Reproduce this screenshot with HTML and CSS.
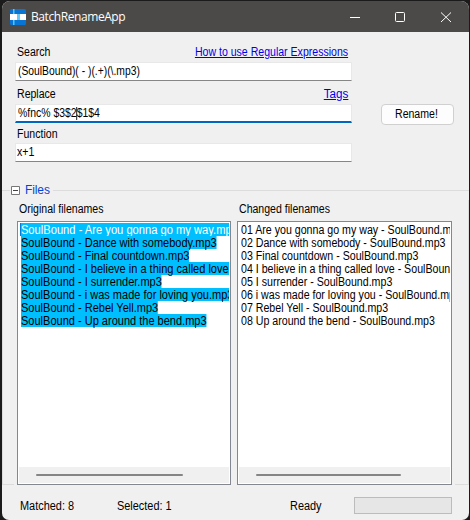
FILE: index.html
```
<!DOCTYPE html>
<html lang="en">
<head>
<meta charset="utf-8">
<title>BatchRenameApp</title>
<link rel="stylesheet" href="styles.css">
</head>
<body>
<main class="window">
  <header class="titlebar">
    <svg class="logo" width="16" height="16" viewBox="0 0 16 16">
      <rect width="16" height="16" rx="1.5" fill="#0875d5"/>
      <rect y="5" width="16" height="6" fill="#fff"/>
      <path d="M3 0h1.5v5H3zM3 11h1.5v5H3z" fill="#50c8f4"/>
      <path d="M7 5h3v6H7z" fill="#66c9f5"/>
    </svg>
    <h1 class="title">BatchRenameApp</h1>
    <svg class="controls" width="104" height="12" viewBox="0 0 104 12" fill="none" stroke="#fff">
      <path d="M0 6.5h10"/>
      <rect x="45.5" y="1.5" width="9" height="9" rx="1"/>
      <path d="M91 1.5l10 9.5M101 1.5l-10 9.5"/>
    </svg>
  </header>
  <section class="form">
    <div class="fields">
      <div class="caption"><label class="narrow">Search</label><a class="narrow help" href="#">How to use Regular Expressions</a></div>
      <div class="input"><span class="narrow pattern">(SoulBound)( - )(.+)(\.mp3)</span></div>
      <div class="caption"><label class="narrow">Replace</label><a class="narrow tags" href="#">Tags</a></div>
      <div class="input focused"><span class="narrow template">%fnc% $3$2<i class="caret"></i>$1$4</span></div>
      <div class="caption function"><label class="narrow">Function</label></div>
      <div class="input last"><span class="narrow">x+1</span></div>
    </div>
    <button class="rename"><span class="narrow">Rename!</span></button>
  </section>
  <section class="group">
    <div class="legend">
      <span class="rule start"></span>
      <svg width="9" height="9" viewBox="0 0 9 9" fill="#fff" stroke="#777"><path d="M.5.5h8v8h-8z"/><path d="M2 4.5h5" stroke="#444"/></svg>
      <span class="legend-text">Files</span>
      <span class="rule"></span>
    </div>
    <div class="lists">
      <div class="column original">
        <h2 class="heading"><span class="narrow">Original filenames</span></h2>
        <div class="listbox">
          <ul class="items marked">
            <li class="current"><span class="narrow">SoulBound - Are you gonna go my way.mp3</span></li>
            <li><span class="narrow">SoulBound - Dance with somebody.mp3</span></li>
            <li><span class="narrow">SoulBound - Final countdown.mp3</span></li>
            <li><span class="narrow">SoulBound - I believe in a thing called love.mp3</span></li>
            <li><span class="narrow">SoulBound - I surrender.mp3</span></li>
            <li><span class="narrow">SoulBound - i was made for loving you.mp3</span></li>
            <li><span class="narrow">SoulBound - Rebel Yell.mp3</span></li>
            <li><span class="narrow">SoulBound - Up around the bend.mp3</span></li>
          </ul>
          <div class="scroll"><span class="thumb"></span></div>
        </div>
      </div>
      <div class="column">
        <h2 class="heading"><span class="narrow">Changed filenames</span></h2>
        <div class="listbox">
          <ul class="items changed">
            <li><span class="narrow">01 Are you gonna go my way - SoulBound.mp3</span></li>
            <li><span class="narrow">02 Dance with somebody - SoulBound.mp3</span></li>
            <li><span class="narrow">03 Final countdown - SoulBound.mp3</span></li>
            <li><span class="narrow">04 I believe in a thing called love - SoulBound.mp3</span></li>
            <li><span class="narrow">05 I surrender - SoulBound.mp3</span></li>
            <li><span class="narrow">06 i was made for loving you - SoulBound.mp3</span></li>
            <li><span class="narrow">07 Rebel Yell - SoulBound.mp3</span></li>
            <li><span class="narrow">08 Up around the bend - SoulBound.mp3</span></li>
          </ul>
          <div class="scroll right"><span class="thumb"></span></div>
        </div>
      </div>
    </div>
  </section>
  <footer class="status">
    <span class="matched"><span class="narrow">Matched: 8</span></span>
    <span class="selected"><span class="narrow">Selected: 1</span></span>
    <span class="ready"><span class="narrow">Ready</span></span>
    <span class="progress"></span>
  </footer>
</main>
</body>
</html>
```

FILE: styles.css
```
* { box-sizing: border-box; }
body {
  margin: 0;
  width: 470px;
  height: 520px;
  padding: 1px 1px 0 2px;
  background: #1c1b1b;
  font: 12px/13px "Liberation Sans", Arial, sans-serif;
  color: #000;
  overflow: hidden;
}
/* condensed dialog face */
.narrow {
  display: inline-block;
  transform: scaleX(0.88);
  transform-origin: 0 50%;
  letter-spacing: 0;
  vertical-align: top;
}
.window {
  height: 519px;
  display: flex;
  flex-direction: column;
  background: #f0f0f0;
  border-radius: 8px 8px 7px 7px;
  overflow: hidden;
}
.titlebar {
  height: 31px;
  flex: none;
  display: flex;
  align-items: center;
  padding: 0 15px 0 8px;
  background: #4b4a48;
  color: #fff;
}
.title {
  margin: 1px auto 0 5px;
  font: 12px/16px "Open Sans", "Noto Sans", sans-serif;
  letter-spacing: -0.42px;
}
.form { display: flex; height: 148px; padding: 12px 14px 0 13px; }
.fields { width: 337px; }
.caption {
  height: 18px;
  padding: 2px 4px 0 2px;
  display: flex;
  justify-content: space-between;
}
a { color: #0000e6; text-decoration: underline; text-underline-offset: 1px; }
a.narrow { transform-origin: 100% 50%; }
.tags.narrow { transform: scaleX(0.97); }
.input {
  height: 19px;
  margin-bottom: 5px;
  padding: 2px;
  background: #fff;
  border: 1px solid #e8e8e8;
  border-bottom-color: #868686;
  white-space: pre;
}
.pattern.narrow { transform: scaleX(0.86); }
.template.narrow { transform: scaleX(0.87); }
.focused { border-bottom: 2px solid #0067c0; margin-bottom: 3px; }
.function { height: 17px; }
.last { padding-left: 1px; }
.caret {
  display: inline-block;
  width: 1px;
  height: 13px;
  margin-right: -1px;
  background: #000;
  vertical-align: -3px;
}
.rename {
  width: 73px;
  height: 21px;
  margin: 60px 0 0 29px;
  padding: 0 0 1px 13px;
  text-align: left;
  border: 1px solid #d0d0d0;
  border-radius: 4px;
  background: #fdfdfd;
  font: inherit;
  color: #000;
}
.group { height: 306px; flex: none; }
.legend { height: 20px; display: flex; align-items: center; color: #0046d5; }
.legend-text { margin: 0 3px 0 5px; letter-spacing: -0.1px; }
.rule { flex: 1; height: 1px; background: #dcdcdc; }
.start { flex: 0 0 8px; margin-right: 1px; }
.lists {
  height: 285px;
  display: flex;
  gap: 6px;
  padding: 3px 15px 0 14px;
  border: solid #dcdcdc;
  border-width: 0 1px;
  background:
    linear-gradient(#dcdcdc, #dcdcdc) left bottom / 11px 1px no-repeat,
    linear-gradient(#dcdcdc, #dcdcdc) right bottom / 13px 1px no-repeat;
}
.column { width: 215px; flex: none; }
.original { width: 214px; }
.heading { height: 13px; margin: 0 0 5px 2px; font: inherit; }
.listbox {
  height: 264px;
  border: 1px solid #828790;
  background: #fff;
  padding: 1px;
  display: flex;
  flex-direction: column;
}
.items { flex: 1; margin: 0; padding: 0; list-style: none; overflow: hidden; }
.items li { height: 13px; padding-left: 2px; white-space: nowrap; }
.items span { height: 13px; line-height: 14px; transform: scaleX(0.918); }
.items.changed span { transform: scaleX(0.886); }
.marked span { background: #00bfff; }
.marked .current { color: #fff; padding-left: 1px; }
.marked .current span { border-left: 1px solid #0078d7; transform: scaleX(0.93); }
.scroll { height: 16px; flex: none; padding: 7px 0 0 17px; background: #f0f0f0; }
.thumb { display: block; width: 147px; height: 2px; background: #858585; border-radius: 1px; }
.right .thumb { width: 145px; }
.status { height: 34px; display: flex; align-items: center; padding: 7px 15px 0 18px; }
.status .narrow { transform: scaleX(0.91); }
.matched { width: 97px; }
.selected { width: 173px; }
.ready { width: 64px; }
.progress { width: 98px; height: 17px; margin-top: -3px; background: #e6e6e6; border: 1px solid #bcbcbc; }
```
